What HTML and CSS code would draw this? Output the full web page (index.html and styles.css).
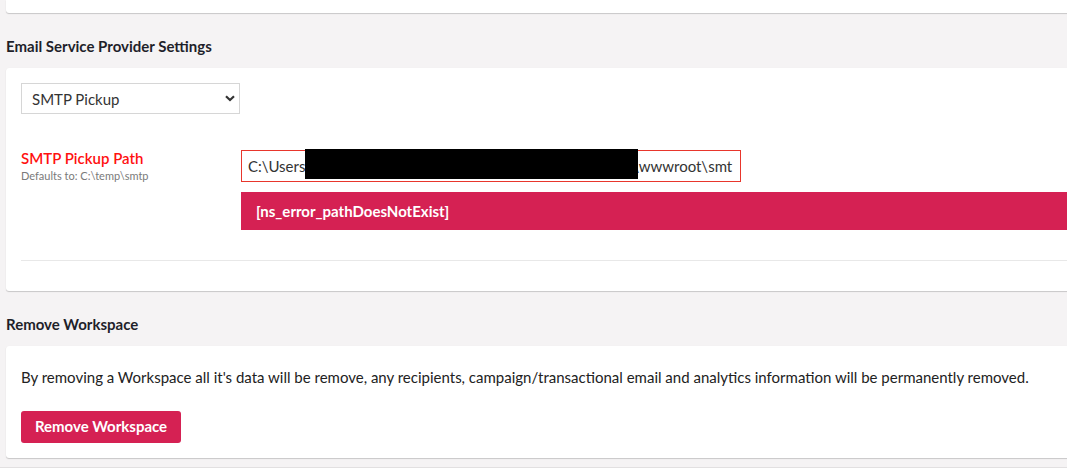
FILE: index.html
```html
<!DOCTYPE html>
<html>
<head>
<meta charset="utf-8">
<link rel="stylesheet" href="styles.css">
</head>
<body>
<div class="page">
  <div class="card card-top"></div>

  <h2 class="section-title">Email Service Provider Settings</h2>
  <div class="card card-esp">
    <div class="select">
      <span>SMTP Pickup</span>
      <svg class="chev" width="10" height="7" viewBox="0 0 10 7"><path d="M1 1.2 L5 5 L9 1.2" fill="none" stroke="#333" stroke-width="2.2"/></svg>
    </div>
    <div class="field-row">
      <div class="field-label">
        <div class="label-main">SMTP Pickup Path</div>
        <div class="label-sub">Defaults to: C:\temp\smtp</div>
      </div>
      <div class="field-body">
        <div class="text-input">
          <span>C:\Users</span><span class="redact-slot"><span class="redact"></span></span><span>\wwwroot\smt</span>
        </div>
        <div class="error-banner">[ns_error_pathDoesNotExist]</div>
      </div>
    </div>
    <div class="divider"></div>
  </div>

  <h2 class="section-title">Remove Workspace</h2>
  <div class="card card-remove">
    <p class="remove-text">By removing a Workspace all it's data will be remove, any recipients, campaign/transactional email and analytics information will be permanently removed.</p>
    <button class="btn-danger">Remove Workspace</button>
  </div>

  <div class="card card-next"></div>
</div>
</body>
</html>
```

FILE: styles.css
```css
html, body {
  margin: 0;
  padding: 0;
  background: #f5f3f4;
  font-family: Lato, "Open Sans", "Liberation Sans", sans-serif;
  color: #222;
  overflow: hidden;
}

.page {
  padding-left: 6px;
  overflow: hidden;
  height: 476px;
}

.card {
  background: #fff;
  margin-right: -20px;
  border-radius: 3px;
  box-shadow: 0 1px 1px rgba(0, 0, 0, 0.18), 0 0 1px rgba(0, 0, 0, 0.06);
}

.card-top {
  height: 13px;
  border-radius: 0 0 3px 3px;
}

.section-title {
  margin: 0;
  padding: 23px 0 12px 0;
  font-size: 15px;
  line-height: 20px;
  font-weight: 700;
  color: #1f1f2a;
}

.card-esp {
  padding: 15px 0 30px 15px;
}

.select {
  height: 29px;
  border: 1px solid #d6d6d6;
  display: flex;
  align-items: center;
  justify-content: space-between;
  padding: 0 4px 0 10px;
  box-sizing: content-box;
  width: 203px;
  font-size: 15px;
  color: #333;
}

.field-row {
  display: flex;
  margin-top: 36px;
}

.field-label {
  width: 220px;
  flex: none;
}

.label-main {
  color: #ff1010;
  font-size: 15px;
  font-weight: 600;
  line-height: 18px;
  margin-top: -1px;
}

.label-sub {
  color: #7a7a7a;
  font-size: 11px;
  line-height: 14px;
  margin-top: 2px;
}

.field-body {
  flex: 1;
}

.text-input {
  border: 1px solid #e8362c;
  display: flex;
  align-items: center;
  padding-left: 6px;
  box-sizing: border-box;
  width: 500px;
  height: 32px;
  font-size: 15px;
  color: #333;
  white-space: nowrap;
}

.redact-slot {
  position: relative;
  display: inline-block;
  width: 327px;
  height: 18px;
}

.redact {
  position: absolute;
  left: 0;
  top: -8px;
  width: 333px;
  height: 30px;
  background: #000;
}

.error-banner {
  margin-top: 10px;
  height: 38px;
  background: #d52153;
  color: #fff;
  font-weight: 700;
  font-size: 15px;
  line-height: 38px;
  padding-left: 15px;
}

.divider {
  margin-top: 30px;
  height: 1px;
  background: #e8e8e8;
}

.card-remove {
  padding: 20px 0 15px 15px;
}

.remove-text {
  margin: 0;
  font-size: 15px;
  line-height: 22px;
  color: #222;
}

.btn-danger {
  display: block;
  margin-top: 23px;
  width: 160px;
  height: 32px;
  border: none;
  border-radius: 3px;
  background: #d52153;
  color: #fff;
  font-family: Lato, "Open Sans", "Liberation Sans", sans-serif;
  font-weight: 700;
  font-size: 15px;
  padding: 0 0 2px 0;
  cursor: pointer;
}

.card-next {
  margin-top: 10px;
  height: 20px;
  border-radius: 0;
  box-shadow: 0 -1px 0 #e2e0e1;
  margin-left: -6px;
}
```
